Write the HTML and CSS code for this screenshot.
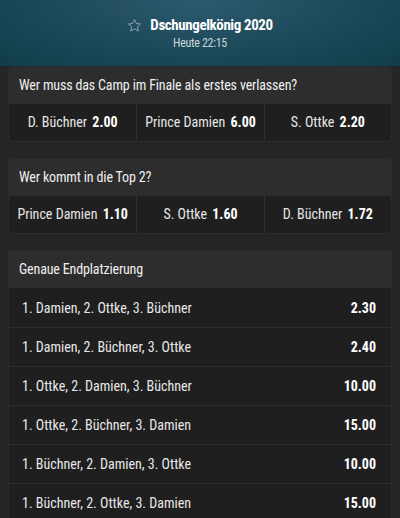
FILE: index.html
```html
<!DOCTYPE html>
<html lang="de">
<head>
  <meta charset="UTF-8" />
  <meta name="viewport" content="width=device-width, initial-scale=1.0"/>
  <title>Dschungelkönig 2020</title>
  <link rel="stylesheet" href="styles.css">
</head>
<body>

  <header class="event-head">
    <div class="event-title">
      <svg class="star" width="15" height="15" viewBox="0 0 24 24" fill="none" stroke="currentColor" stroke-width="1.6" stroke-linejoin="round">
        <path d="M12 2.5l2.9 6.3 6.9.7-5.2 4.6 1.5 6.8L12 17.4l-6.1 3.5 1.5-6.8-5.2-4.6 6.9-.7z"/>
      </svg>
      <h1>Dschungelkönig 2020</h1>
    </div>
    <div class="event-time">Heute 22:15</div>
  </header>

  <main class="markets">
    <section class="market">
      <h2>Wer muss das Camp im Finale als erstes verlassen?</h2>
      <div class="outcomes">
        <div class="outcome">D. Büchner <b>2.00</b></div>
        <div class="outcome">Prince Damien <b>6.00</b></div>
        <div class="outcome">S. Ottke <b>2.20</b></div>
      </div>
    </section>

    <section class="market">
      <h2>Wer kommt in die Top 2?</h2>
      <div class="outcomes">
        <div class="outcome">Prince Damien <b>1.10</b></div>
        <div class="outcome">S. Ottke <b>1.60</b></div>
        <div class="outcome">D. Büchner <b>1.72</b></div>
      </div>
    </section>

    <section class="market">
      <h2>Genaue Endplatzierung</h2>
      <div class="list">
        <div class="list-row"><span>1. Damien, 2. Ottke, 3. Büchner</span><b>2.30</b></div>
        <div class="list-row"><span>1. Damien, 2. Büchner, 3. Ottke</span><b>2.40</b></div>
        <div class="list-row"><span>1. Ottke, 2. Damien, 3. Büchner</span><b>10.00</b></div>
        <div class="list-row"><span>1. Ottke, 2. Büchner, 3. Damien</span><b>15.00</b></div>
        <div class="list-row"><span>1. Büchner, 2. Damien, 3. Ottke</span><b>10.00</b></div>
        <div class="list-row"><span>1. Büchner, 2. Ottke, 3. Damien</span><b>15.00</b></div>
      </div>
    </section>
  </main>

</body>
</html>
```

FILE: styles.css
```css
* { box-sizing: border-box; margin: 0; padding: 0; }

body {
  background: #252525;
  color: #e8e8e8;
  font-family: "Roboto Condensed", "Liberation Sans Narrow", Roboto, sans-serif;
  font-size: 14px;
  overflow: hidden;
}

.event-head {
  height: 66px;
  padding-top: 15px;
  text-align: center;
  background: radial-gradient(ellipse 70% 140% at 50% 0%, #2d596d 0%, #1d4a5a 55%, #103d49 100%);
}

.event-title {
  display: flex;
  justify-content: center;
  align-items: center;
  gap: 8px;
  height: 20px;
}

.star {
  color: #8aa3ad;
}

h1 {
  font-size: 15px;
  font-weight: 700;
  letter-spacing: -0.4px;
  color: #fff;
}

.event-time {
  font-size: 12px;
  letter-spacing: -0.3px;
  color: #c9d5d9;
  margin-top: 1px;
}

.markets {
  padding: 0 8px;
  display: flex;
  flex-direction: column;
  gap: 16px;
}

.market {
  background: #1f1f1f;
  border: 1px solid #2b2b2b;
  border-radius: 3px;
  overflow: hidden;
}

.market h2 {
  font-size: 14px;
  font-weight: 400;
  color: #f0f0f0;
  background: #2d2d2d;
  height: 37px;
  line-height: 37px;
  padding-left: 10px;
  letter-spacing: -0.15px;
}

.outcomes {
  display: grid;
  grid-template-columns: repeat(3, 1fr);
}

.outcome {
  height: 37px;
  line-height: 37px;
  text-align: center;
  color: #e6e6e6;
  border-left: 1px solid #2e2e2e;
}

.outcome:first-child { border-left: none; }

.outcome b, .list-row b {
  color: #fff;
  font-weight: 700;
  margin-left: 2px;
}

.list-row {
  display: flex;
  justify-content: space-between;
  align-items: center;
  height: 39px;
  padding: 0 15px 0 13px;
  border-top: 1px solid #2e2e2e;
}

.list-row:first-child { border-top: none; }
```
